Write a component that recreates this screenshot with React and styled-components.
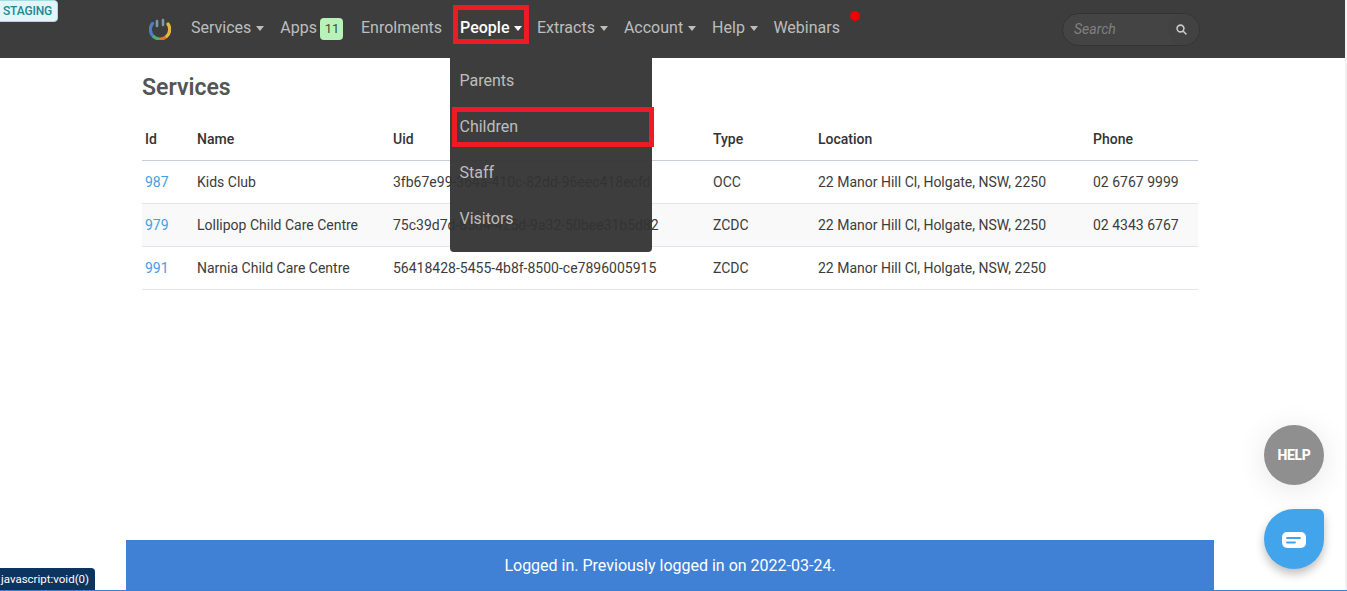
import React from 'react'
import styled, { createGlobalStyle } from 'styled-components'

const Global = createGlobalStyle`
  html, body { margin: 0; padding: 0; height: 100%; overflow: hidden; background: #fff; }
  body { font-family: Roboto, "Liberation Sans", sans-serif; }
  #root { height: 591px; }
`

const Page = styled.div`
  position: relative;
  width: 1347px;
  height: 591px;
  display: flex;
  flex-direction: column;
  overflow: hidden;
  border-bottom: 1px solid #3f7fcf;
  box-sizing: border-box;
`

const Navbar = styled.nav`
  height: 58px;
  flex: none;
  background: #3d3d3d;
  display: flex;
`

const NavInner = styled.div`
  width: 1056px;
  margin-left: 142px;
  display: flex;
  align-items: center;
  padding-bottom: 2px;
  box-sizing: border-box;
`

const Logo = styled.svg`
  width: 22px;
  height: 24px;
  margin: 0 20px 0 7px;
  flex: none;
`

const NavLink = styled.a`
  position: relative;
  display: flex;
  align-items: center;
  color: ${p => (p.$active ? '#fff' : '#bdbdbd')};
  font-size: 16px;
  font-weight: ${p => (p.$active ? 500 : 400)};
  line-height: 20px;
  margin-right: ${p => p.$gap}px;
`

const Caret = styled.span`
  width: 0;
  height: 0;
  margin-left: 5px;
  margin-top: 1px;
  border-left: 4px solid transparent;
  border-right: 4px solid transparent;
  border-top: 5px solid currentColor;
`

const CountBadge = styled.span`
  display: inline-block;
  width: 23px;
  height: 22px;
  line-height: 22px;
  margin: 2px 0 0 3.5px;
  text-align: center;
  font-size: 13px;
  color: #33523a;
  background: #b9f2b9;
  border-radius: 4px;
`

const RedDot = styled.span`
  position: absolute;
  top: -7px;
  right: -20px;
  width: 10px;
  height: 10px;
  border-radius: 50%;
  background: #f00000;
`

const SearchBox = styled.div`
  margin: 2px -2px 0 auto;
  width: 138px;
  height: 33px;
  box-sizing: border-box;
  border: 1px solid #333;
  border-radius: 17px;
  background: #444;
  display: flex;
  align-items: center;
  justify-content: space-between;
  padding: 0 0 0 11px;
`

const SearchText = styled.span`
  font-size: 14px;
  font-style: italic;
  color: #808080;
`

const SearchIcon = styled.span`
  width: 31px;
  height: 31px;
  padding-right: 4px;
  box-sizing: border-box;
  border-radius: 50%;
  background: #424242;
  display: flex;
  align-items: center;
  justify-content: center;
`

const Content = styled.main`
  width: 1056px;
  margin-left: 142px;
  flex: 1;
  min-height: 0;
`

const Title = styled.h1`
  margin: 0;
  padding-top: 16px;
  height: 61px;
  box-sizing: border-box;
  font-size: 23px;
  line-height: 28px;
  font-weight: 600;
  color: #555;
`

const Table = styled.table`
  width: 1056px;
  border-collapse: collapse;
  table-layout: fixed;
  font-size: 14px;
  color: #3c3c3c;
`

const Th = styled.th`
  width: ${p => p.$w}px;
  height: 41px;
  padding: 0 3px;
  box-sizing: border-box;
  text-align: left;
  font-weight: 500;
  color: #333;
  border-bottom: 1px solid #c9cdd8;
`

const Row = styled.tr`
  background: ${p => (p.$odd ? '#f9f9f9' : '#fff')};
`

const Td = styled.td`
  height: 43px;
  padding: 0 3px;
  box-sizing: border-box;
  white-space: nowrap;
  border-bottom: 1px solid #e2e5ea;
`

const IdLink = styled.a`
  color: #42a0ea;
`

const Footer = styled.div`
  width: 1088px;
  height: 50px;
  flex: none;
  margin-left: 126px;
  background: #4081d6;
  color: #fff;
  font-size: 16px;
  display: flex;
  align-items: center;
  justify-content: center;
`

const Scrollbar = styled.div`
  position: absolute;
  top: 0;
  right: 0;
  bottom: 0;
  width: 2px;
  background: #f1f1f1;
`

const Staging = styled.div`
  position: absolute;
  top: 0;
  left: -7px;
  height: 22px;
  padding: 0 5px 0 9px;
  line-height: 21px;
  box-sizing: border-box;
  border: 1px solid #a5dbe2;
  border-radius: 4px;
  background: #e2f6f9;
  color: #1f8793;
  font-size: 12px;
  font-weight: 500;
  letter-spacing: -0.15px;
`

const Menu = styled.div`
  position: absolute;
  top: 58px;
  left: 450px;
  width: 202px;
  height: 194px;
  background: rgba(51, 51, 51, 0.95);
  border-radius: 0 0 4px 4px;
  display: flex;
  flex-direction: column;
`

const MenuItem = styled.a`
  height: 46px;
  line-height: 45px;
  padding-left: 9.5px;
  font-size: 16px;
  color: #bdbdbd;
`

const Annotation = styled.div`
  position: absolute;
  left: ${p => p.$x}px;
  top: ${p => p.$y}px;
  width: ${p => p.$w}px;
  height: ${p => p.$h}px;
  box-sizing: border-box;
  border: 5px solid #ed1c24;
`

const HelpButton = styled.div`
  position: absolute;
  left: 1264px;
  top: 425px;
  width: 60px;
  height: 60px;
  border-radius: 50%;
  background: #8f8f8f;
  box-shadow: 0 4px 30px rgba(0, 0, 0, 0.1);
  color: #fff;
  font-size: 14px;
  font-weight: 800;
  letter-spacing: -0.3px;
  display: flex;
  align-items: center;
  justify-content: center;
`

const ChatButton = styled.div`
  position: absolute;
  left: 1264px;
  top: 509px;
  width: 60px;
  height: 60px;
  padding-top: 2px;
  box-sizing: border-box;
  border-radius: 50% 6px 50% 50%;
  background: #42a5ec;
  box-shadow: 0 5px 10px rgba(0, 0, 0, 0.25);
  display: flex;
  align-items: center;
  justify-content: center;
`

const Tooltip = styled.div`
  position: absolute;
  left: 0;
  top: 568px;
  width: 95px;
  height: 22px;
  box-sizing: border-box;
  padding-left: 1px;
  background: #0c3461;
  border-radius: 0 4px 0 0;
  color: #fff;
  font-size: 11.5px;
  line-height: 23px;
`

const services = [
  ['987', 'Kids Club', '3fb67e99-364a-410c-82dd-96eec418ecfd', 'OCC', '22 Manor Hill Cl, Holgate, NSW, 2250', '02 6767 9999'],
  ['979', 'Lollipop Child Care Centre', '75c39d7d-8504-425d-9a32-50bee31b5d82', 'ZCDC', '22 Manor Hill Cl, Holgate, NSW, 2250', '02 4343 6767'],
  ['991', 'Narnia Child Care Centre', '56418428-5455-4b8f-8500-ce7896005915', 'ZCDC', '22 Manor Hill Cl, Holgate, NSW, 2250', ''],
]

const columns = [['Id', 52], ['Name', 196], ['Uid', 320], ['Type', 105], ['Location', 275], ['Phone', 108]]

export default function App() {
  return (
    <Page>
      <Global />
      <Navbar>
        <NavInner>
          <Logo viewBox="0 0 22 24" fill="none" strokeWidth="3.2">
            <path d="M3.500 7.500 A9.500 9.500 0 0 0 4 20" stroke="#4f7cc9" strokeLinecap="round" />
            <path d="M4 20 A9.500 9.500 0 0 0 11 23" stroke="#4fae6a" />
            <path d="M11 23 A9.500 9.500 0 0 0 18 20" stroke="#d9792b" />
            <path d="M18 20 A9.500 9.500 0 0 0 19 8" stroke="#e3b83f" strokeLinecap="round" />
            <path d="M8 5 V10 M14 4 V9" stroke="#7f98a8" strokeWidth="2.600" strokeLinecap="round" />
          </Logo>
          <NavLink $gap={16}>Services<Caret /></NavLink>
          <NavLink $gap={17.5}>Apps<CountBadge>11</CountBadge></NavLink>
          <NavLink $gap={18}>Enrolments</NavLink>
          <NavLink $gap={14.5} $active>People<Caret /></NavLink>
          <NavLink $gap={16}>Extracts<Caret /></NavLink>
          <NavLink $gap={16}>Account<Caret /></NavLink>
          <NavLink $gap={15.5}>Help<Caret /></NavLink>
          <NavLink $gap={0}>Webinars<RedDot /></NavLink>
          <SearchBox>
            <SearchText>Search</SearchText>
            <SearchIcon>
              <svg width="11" height="11" viewBox="0 0 11 11" fill="none" stroke="#c8c8c8" strokeWidth="1.600">
                <circle cx="4.500" cy="4.500" r="3.400" />
                <path d="M7 7 L10 10" strokeLinecap="round" />
              </svg>
            </SearchIcon>
          </SearchBox>
        </NavInner>
      </Navbar>
      <Content>
        <Title>Services</Title>
        <Table>
          <thead>
            <tr>
              {columns.map(([label, w]) => <Th key={label} $w={w}>{label}</Th>)}
            </tr>
          </thead>
          <tbody>
            {services.map((s, i) => (
              <Row key={s[0]} $odd={i === 1}>
                <Td><IdLink>{s[0]}</IdLink></Td>
                {s.slice(1).map((v, j) => <Td key={j}>{v}</Td>)}
              </Row>
            ))}
          </tbody>
        </Table>
      </Content>
      <Footer>Logged in. Previously logged in on 2022-03-24.</Footer>
      <Scrollbar />

      <Staging>STAGING</Staging>
      <Menu>
        <MenuItem>Parents</MenuItem>
        <MenuItem>Children</MenuItem>
        <MenuItem>Staff</MenuItem>
        <MenuItem>Visitors</MenuItem>
      </Menu>
      <Annotation $x={453} $y={5} $w={76} $h={39} />
      <Annotation $x={452} $y={107} $w={202} $h={40} />
      <HelpButton>HELP</HelpButton>
      <ChatButton>
        <svg width="24" height="17" viewBox="0 0 24 17">
          <path d="M5 0 H19 A5 5 0 0 1 24 5 V11 A5 5 0 0 1 19 16 H7 Q3 16.500 1 14 Q0 12 0 10 V5 A5 5 0 0 1 5 0 Z" fill="#fff" />
          <path d="M5 6 H18 M5 10.500 H13" stroke="#42a5ec" strokeWidth="1.800" strokeLinecap="round" />
        </svg>
      </ChatButton>
      <Tooltip>javascript:void(0)</Tooltip>
    </Page>
  )
}
